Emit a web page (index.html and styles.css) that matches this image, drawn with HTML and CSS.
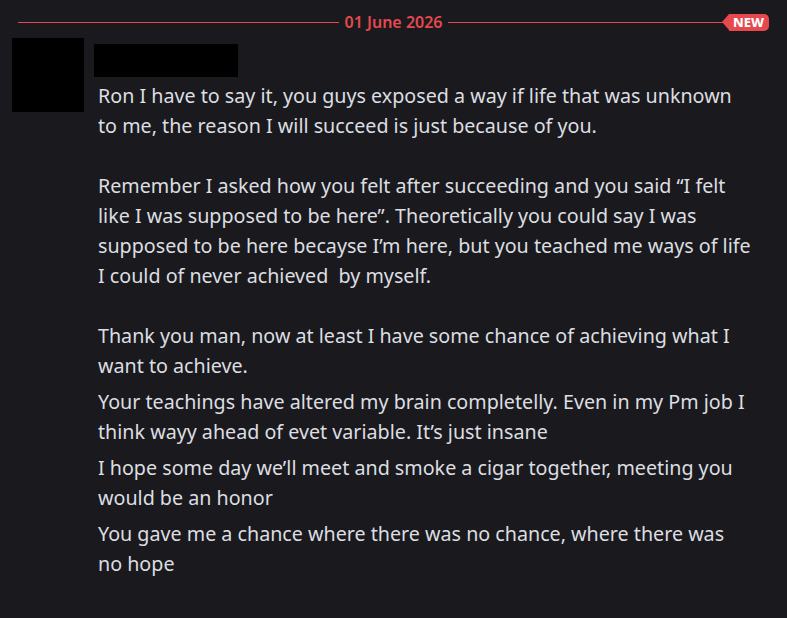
FILE: index.html
```html
<!DOCTYPE html>
<html lang="en">

<head>
  <meta charset="UTF-8" />
  <title>Messages</title>
  <link rel="stylesheet" href="styles.css">
</head>

<body>
  <div class="divider">
    <span class="divider-line"></span>
    <span class="divider-date">01 June 2026</span>
    <span class="divider-line"></span>
    <span class="new-badge">NEW</span>
  </div>

  <div class="message-group">
    <div class="avatar"></div>
    <div class="message-body">
      <div class="username"></div>
      <div class="message">Ron I have to say it, you guys exposed a way if life that was unknown
to me, the reason I will succeed is just because of you.

Remember I asked how you felt after succeeding and you said “I felt
like I was supposed to be here”. Theoretically you could say I was
supposed to be here becayse I’m here, but you teached me ways of life
I could of never achieved&nbsp; by myself.

Thank you man, now at least I have some chance of achieving what I
want to achieve.</div>
      <div class="message">Your teachings have altered my brain completelly. Even in my Pm job I
think wayy ahead of evet variable. It’s just insane</div>
      <div class="message">I hope some day we’ll meet and smoke a cigar together, meeting you
would be an honor</div>
      <div class="message">You gave me a chance where there was no chance, where there was
no hope</div>
    </div>
  </div>
</body>

</html>
```

FILE: styles.css
```css
html,
body {
  margin: 0;
  padding: 0;
  background-color: #1a1a1e;
  font-family: 'Noto Sans', sans-serif;
  overflow: hidden;
}

.divider {
  position: relative;
  display: flex;
  align-items: center;
  padding: 14px 18px 0 18px;
  height: 17px;
}

.divider-line {
  flex: 1;
  height: 1px;
  background-color: #e5484d;
}

.divider-date {
  padding: 0 6px;
  font-size: 16px;
  font-weight: 600;
  color: #e5484d;
  line-height: 17px;
}

.new-badge {
  position: absolute;
  right: 18px;
  top: 14px;
  padding: 0 5px 0 4px;
  height: 17px;
  line-height: 17px;
  font-size: 13px;
  font-weight: 800;
  color: #ffffff;
  background-color: #e5484d;
  border-radius: 0 5px 5px 0;
}

/* arrow tip on the left of the badge */
.new-badge::before {
  content: '';
  position: absolute;
  left: -7px;
  top: 0;
  border-style: solid;
  border-width: 8.5px 7px 8.5px 0;
  border-color: transparent #e5484d transparent transparent;
}

.message-group {
  display: flex;
  gap: 10px;
  margin-top: 7px;
  padding-left: 12px;
}

.avatar {
  flex: none;
  width: 72px;
  height: 74px;
  background-color: #000000;
}

.message-body {
  flex: 1;
  padding-top: 6px;
}

.username {
  width: 144px;
  height: 33px;
  background-color: #000000;
  margin-bottom: 1px;
}

.message {
  padding: 3px 0 3px 4px;
  font-size: 19.7px;
  line-height: 30px;
  color: #dcdee1;
  white-space: pre;
}
```
